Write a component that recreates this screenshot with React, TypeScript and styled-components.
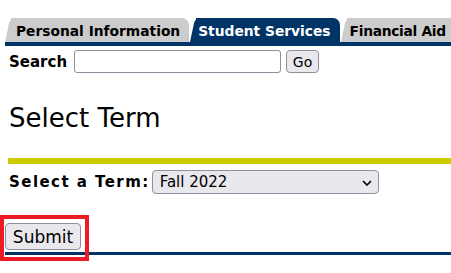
import React from "react";
import styled, { createGlobalStyle } from "styled-components";

const Global = createGlobalStyle`
  html, body { margin: 0; padding: 0; background: #ffffff; }
  body { font-family: "DejaVu Sans", Verdana, sans-serif; color: #000000; }
`;

const Page = styled.div`
  width: 451px;
  height: 273px;
  overflow: hidden;
  display: flex;
  flex-direction: column;
  padding-left: 5px;
  box-sizing: border-box;
`;

const TabRow = styled.div`
  display: flex;
  margin-top: 18px;
  height: 24px;
  gap: 1px;
  white-space: nowrap;
`;

const Tab = styled.div<{ $active?: boolean; $pl: number; $pr: number; $ls?: number }>`
  position: relative;
  display: flex;
  align-items: center;
  padding: 1px ${(p) => p.$pr}px 0 ${(p) => p.$pl}px;
  font-size: 13.8px;
  font-weight: bold;
  letter-spacing: ${(p) => p.$ls ?? 0}px;
  color: ${(p) => (p.$active ? "#ffffff" : "#000000")};
  background: ${(p) => (p.$active ? "#003366" : "#cccccc")};
  border-top-right-radius: 7px;
  margin-left: 6px;
  flex-shrink: 0;
  &::before {
    content: "";
    position: absolute;
    left: -6px;
    top: 0;
    bottom: 0;
    width: 12px;
    background: inherit;
    border-top-left-radius: 5px;
    transform: skewX(-12deg);
    transform-origin: bottom left;
  }
  span { position: relative; }
`;

const NavyBar = styled.div<{ $h: number }>`
  height: ${(p) => p.$h}px;
  background: #003366;
`;

const SearchRow = styled.div`
  display: flex;
  align-items: center;
  margin-top: 4px;
  height: 23px;
  padding-left: 4px;
`;

const Label = styled.label<{ $size: number; $ls: number }>`
  font-weight: bold;
  font-size: ${(p) => p.$size}px;
  letter-spacing: ${(p) => p.$ls}px;
`;

const TextInput = styled.input`
  box-sizing: border-box;
  width: 207px;
  height: 23px;
  margin-left: 7px;
  border: 1px solid #8f8f9d;
  border-radius: 3px;
  background: #ffffff;
  padding: 0 4px;
  font-family: "DejaVu Sans", sans-serif;
  font-size: 14px;
`;

const Button = styled.button<{ $w: number; $h: number; $size: number }>`
  box-sizing: border-box;
  width: ${(p) => p.$w}px;
  height: ${(p) => p.$h}px;
  border: 1px solid #8f8f9d;
  border-radius: 4px;
  background: #e9e9ed;
  color: #000000;
  font-family: "DejaVu Sans", sans-serif;
  font-size: ${(p) => p.$size}px;
  padding: 0;
  display: flex;
  align-items: center;
  justify-content: center;
`;

const GoButton = styled(Button)`
  margin-left: 5px;
`;

const Heading = styled.h2`
  margin: 30px 0 0 4px;
  font-size: 26px;
  font-weight: normal;
  line-height: 30px;
`;

const YellowBar = styled.div`
  margin: 25px 0 0 3px;
  height: 6px;
  background: #cccc00;
`;

const TermRow = styled.div`
  display: flex;
  align-items: center;
  margin-top: 6px;
  height: 24px;
  padding-left: 4px;
`;

const SelectWrap = styled.div`
  position: relative;
  margin-left: 2px;
  width: 227px;
  height: 24px;
`;

const Select = styled.select`
  appearance: none;
  box-sizing: border-box;
  width: 100%;
  height: 100%;
  border: 1px solid #8f8f9d;
  border-radius: 4px;
  background: #e9e9ed;
  color: #000000;
  font-family: "DejaVu Sans", sans-serif;
  font-size: 15px;
  padding: 0 0 0 7px;
`;

const Chevron = styled.svg`
  position: absolute;
  right: 7px;
  top: 10px;
  pointer-events: none;
`;

const SubmitArea = styled.div`
  position: relative;
  margin-top: 29px;
  display: flex;
  flex-direction: column;
`;

const SubmitButton = styled(Button)``;

const BottomLine = styled(NavyBar)`
  margin-top: 2px;
`;

const Highlight = styled.div`
  position: absolute;
  left: -5px;
  top: -8px;
  width: 89px;
  height: 46px;
  box-sizing: border-box;
  border: 4px solid #ed1c24;
  pointer-events: none;
`;

export default function App() {
  return (
    <>
      <Global />
      <Page>
        <TabRow>
          <Tab $pl={5} $pr={9}>
            <span>Personal Information</span>
          </Tab>
          <Tab $active $pl={2} $pr={9}>
            <span>Student Services</span>
          </Tab>
          <Tab $pl={3} $pr={10} $ls={-0.3}>
            <span>Financial Aid</span>
          </Tab>
        </TabRow>
        <NavyBar $h={4} />
        <SearchRow>
          <Label $size={15} $ls={0}>Search</Label>
          <TextInput type="text" />
          <GoButton $w={33} $h={23} $size={14}>Go</GoButton>
        </SearchRow>
        <Heading>Select Term</Heading>
        <YellowBar />
        <TermRow>
          <Label $size={15} $ls={1.45}>Select a Term:</Label>
          <SelectWrap>
            <Select defaultValue="Fall 2022">
              <option>Fall 2022</option>
            </Select>
            <Chevron width="10" height="6" viewBox="0 0 10 6">
              <path d="M1 1 L5 5 L9 1" fill="none" stroke="#000" strokeWidth="1.6" />
            </Chevron>
          </SelectWrap>
        </TermRow>
        <SubmitArea>
          <SubmitButton $w={76} $h={27} $size={17}>Submit</SubmitButton>
          <BottomLine $h={3} />
          <Highlight />
        </SubmitArea>
      </Page>
    </>
  );
}
